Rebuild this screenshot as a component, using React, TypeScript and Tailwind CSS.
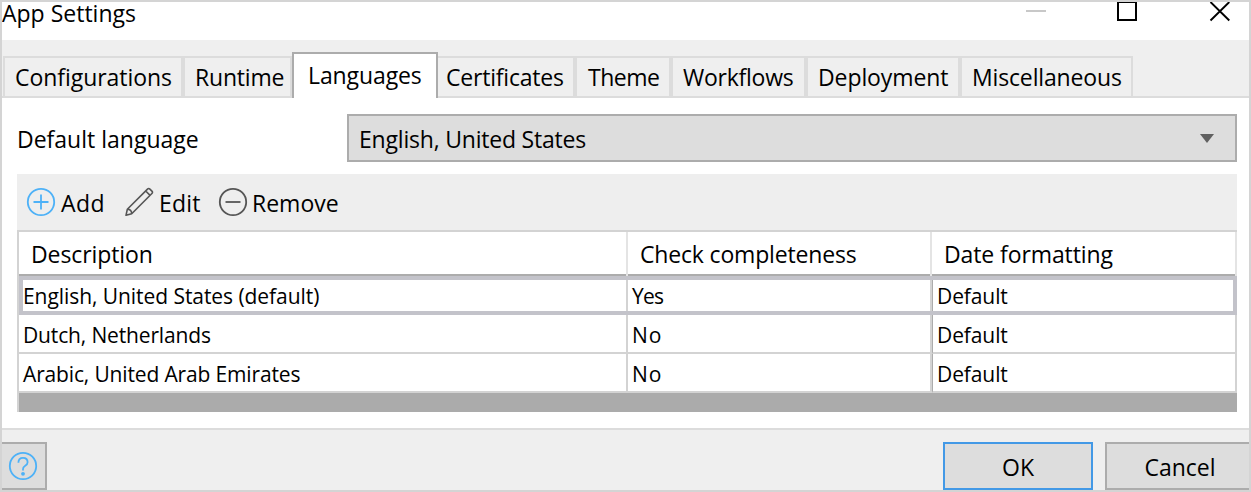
import React from "react";
import clsx from "clsx";

type Tab = { label: string; box: string; text: string; active?: boolean };

const tabs: Tab[] = [
  { label: "Configurations", box: "w-[180px] border-l-2 pl-[10px]", text: "tracking-[-0.05px]" },
  { label: "Runtime", box: "w-[109px] border-l-2 pl-[10px]", text: "tracking-[-0.2px]" },
  { label: "Languages", box: "w-[146px] pl-[14px]", text: "tracking-[-0.1px]", active: true },
  { label: "Certificates", box: "w-[137px] pl-[8px]", text: "tracking-[-0.2px]" },
  { label: "Theme", box: "w-[96px] border-l-2 pl-[11px]", text: "tracking-[-0.5px]" },
  { label: "Workflows", box: "w-[135px] border-l-2 pl-[10px]", text: "tracking-[-0.25px]" },
  { label: "Deployment", box: "w-[154px] border-l-2 pl-[10px]", text: "tracking-[-0.1px]" },
  { label: "Miscellaneous", box: "w-[173px] border-l-2 pl-[10px]", text: "tracking-[-0.15px]" },
];

const rows = [
  { name: "English, United States (default)", nameText: "tracking-[-0.06px]", check: "Yes", checkText: "tracking-[-0.8px]", selected: true },
  { name: "Dutch, Netherlands", nameText: "tracking-[-0.15px]", check: "No", checkText: "tracking-[1px]", selected: false },
  { name: "Arabic, United Arab Emirates", nameText: "tracking-[-0.15px]", check: "No", checkText: "tracking-[1px]", selected: false },
];

function TitleBar() {
  return (
    <header className="flex h-[38px] shrink-0 justify-between bg-white">
      <h1 className="leading-[22px]">App Settings</h1>
      <svg width="224" height="30" viewBox="0 0 224 30" fill="none" shapeRendering="crispEdges">
        <path d="M1 9h20" stroke="#c8c8c8" strokeWidth="2" />
        <path d="M93 0h18v18h-18z" stroke="#000" strokeWidth="2" />
        <path d="M185.500 0l18.800 18.500M204.300 0l-18.800 18.500" stroke="#000" strokeWidth="1.900" shapeRendering="auto" />
      </svg>
    </header>
  );
}

function TabBar() {
  return (
    <nav className="flex h-[58px] shrink-0 items-end bg-[#efefef] pl-px shadow-[inset_0_-2px_0_#dcdcdc]">
      {tabs.map((tab) => (
        <div
          key={tab.label}
          className={clsx(
            "shrink-0 whitespace-nowrap",
            tab.box,
            tab.active
              ? "h-[46px] border-x-2 border-t-2 border-[#acacac] bg-white leading-[42px]"
              : "h-[42px] border-t-2 border-r-2 border-[#dcdcdc] leading-[38px]",
          )}
        >
          <span className={tab.text}>{tab.label}</span>
        </div>
      ))}
    </nav>
  );
}

function Toolbar() {
  return (
    <div className="flex h-[56px] items-center bg-[#eeeeee] pl-[9px]">
      <svg width="30" height="30" viewBox="0 0 30 30" fill="none" stroke="#4db1f7" strokeWidth="1.800">
        <circle cx="15" cy="15" r="13.200" />
        <path d="M15 7.500v15M7.500 15h15" />
      </svg>
      <span className="mt-[2px] ml-[5px] w-[62px] tracking-[0.4px]">Add</span>
      <svg width="32" height="32" viewBox="0 0 32 32" fill="none" stroke="#555" strokeWidth="1.600" strokeLinejoin="round">
        <path d="M3 29.300l1.300-6L24.500 3.100q1.200-1.200 2.400 0l2 2q1.200 1.200 0 2.400L8.700 27.700zM22.700 5l4.400 4.400M4.300 23.300q4.300.1 4.400 4.400" />
      </svg>
      <span className="mt-[2px] ml-[4px] w-[59px] tracking-[0.2px]">Edit</span>
      <svg width="30" height="30" viewBox="0 0 30 30" fill="none" stroke="#555" strokeWidth="1.800">
        <circle cx="15" cy="15" r="13.200" />
        <path d="M7.500 15h15" />
      </svg>
      <span className="mt-[2px] ml-[4px]">Remove</span>
    </div>
  );
}

function LanguageTable() {
  return (
    <div className="flex h-[182px] flex-col border-t-2 border-l-2 border-[#d3d3d3] bg-[#ababab]">
      <div className="grid h-[44px] shrink-0 grid-cols-[609px_304px_305px] grid-rows-[44px] bg-white leading-[44px]">
        <div className="border-r-2 border-[#e4e4e4]">
          <div className="h-full border-b-2 border-[#acacac] pl-[12px] tracking-[-0.1px]">Description</div>
        </div>
        <div className="border-r-2 border-[#e4e4e4]">
          <div className="h-full border-b-2 border-[#acacac] pl-[12px] tracking-[-0.17px]">Check completeness</div>
        </div>
        <div className="border-r-2 border-[#e4e4e4]">
          <div className="h-full border-b-2 border-[#acacac] pl-[12px] tracking-[-0.1px]">Date formatting</div>
        </div>
      </div>
      {rows.map((row) => (
        <div
          key={row.name}
          className="relative grid h-[39px] shrink-0 grid-cols-[609px_304px_305px] grid-rows-[39px] bg-white text-[21px] leading-[40px] whitespace-nowrap"
        >
          <div className="border-r-2 border-b-2 border-[#d3d3d3] pl-[4px]">
            <span className={row.nameText}>{row.name}</span>
          </div>
          <div className="border-r-2 border-b-2 border-[#d3d3d3] pl-[4px]">
            <span className={row.checkText}>{row.check}</span>
          </div>
          <div className="border-r-2 border-b-2 border-l border-[#d3d3d3] border-l-[#acacac] pl-[4px] tracking-[-0.1px]">
            Default
          </div>
          {row.selected && <div className="pointer-events-none absolute inset-0 border-4 border-[#c3c3ca]" />}
        </div>
      ))}
    </div>
  );
}

function Footer() {
  return (
    <footer className="flex h-[62px] shrink-0 overflow-hidden border-t-2 border-[#dcdcdc] bg-[#efefef] pt-[12px]">
      <button className="flex h-[48px] w-[45px] shrink-0 items-center border-y-2 border-r-2 border-[#acacac] bg-[#dddddd] pl-[6px]">
        <svg width="30" height="30" viewBox="0 0 30 30" fill="none" stroke="#4db1f7" strokeWidth="1.800">
          <circle cx="15" cy="15" r="13.200" />
          <path d="M10.400 11.700q0-4.800 4.600-4.800t4.600 4.400q0 2-2.400 3.500T15 18.200v1.200" />
          <circle cx="15" cy="22.800" r="1.900" fill="#4db1f7" stroke="none" />
        </svg>
      </button>
      <button className="ml-auto h-[48px] w-[150px] shrink-0 border-2 border-[#4399e6] bg-[#dddddd] pt-[2px]">OK</button>
      <button className="-mr-[6px] ml-[12px] h-[48px] w-[150px] shrink-0 border-2 border-[#acacac] bg-[#dddddd] pt-[2px]">
        Cancel
      </button>
    </footer>
  );
}

export default function App() {
  return (
    <div className="flex h-[492px] w-[1251px] flex-col overflow-hidden border-2 border-[#d4d4d4] bg-white font-['Open_Sans','Noto_Sans',sans-serif] text-[23px] leading-[32px] font-normal text-black">
      <TitleBar />
      <TabBar />
      <main className="flex grow flex-col pt-[16px] pr-[12px] pl-[15px]">
        <div className="flex h-[48px] shrink-0">
          <label className="w-[330px] leading-[50px]">Default language</label>
          <div className="flex grow items-center justify-between border-2 border-[#acacac] bg-[#dddddd] pr-[21px] pl-[10px]">
            <span className="mt-[2px] tracking-[-0.2px]">English, United States</span>
            <svg width="14" height="9" viewBox="0 0 14 9">
              <path d="M0 0h14L7 9z" fill="#606060" />
            </svg>
          </div>
        </div>
        <div className="mt-[12px]">
          <Toolbar />
          <LanguageTable />
        </div>
      </main>
      <Footer />
    </div>
  );
}
